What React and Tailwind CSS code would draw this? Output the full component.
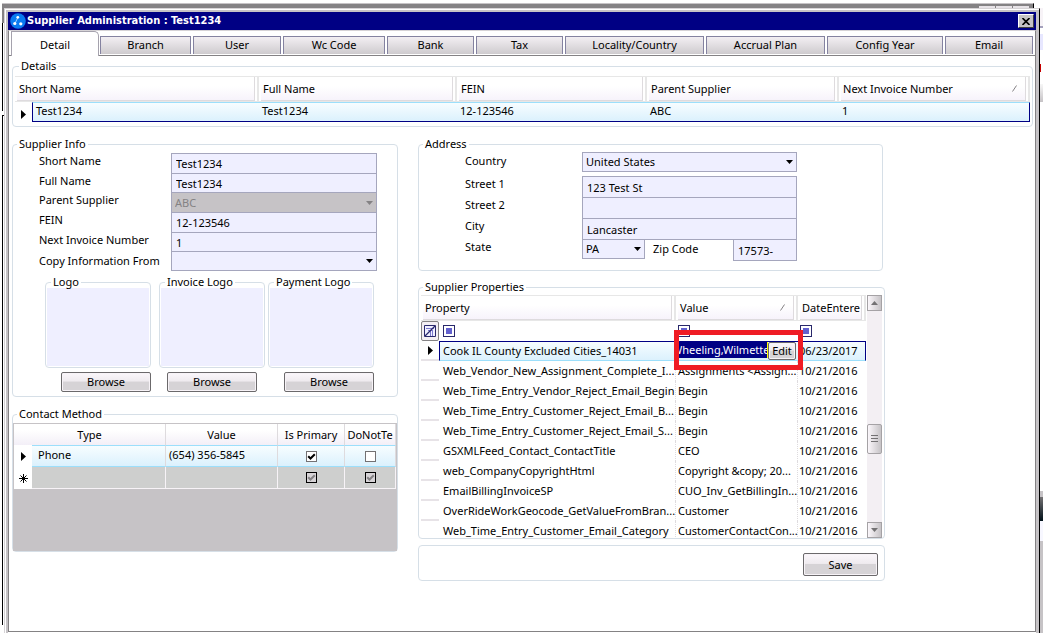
import React from "react";

const tabs = ["Detail", "Branch", "User", "Wc Code", "Bank", "Tax", "Locality/Country", "Accrual Plan", "Config Year", "Email"];

const properties = [
  ["Web_Vendor_New_Assignment_Complete_I...", "Assignments <Assign...", "10/21/2016"],
  ["Web_Time_Entry_Vendor_Reject_Email_Begin", "Begin", "10/21/2016"],
  ["Web_Time_Entry_Customer_Reject_Email_B...", "Begin", "10/21/2016"],
  ["Web_Time_Entry_Customer_Reject_Email_S...", "Begin", "10/21/2016"],
  ["GSXMLFeed_Contact_ContactTitle", "CEO", "10/21/2016"],
  ["web_CompanyCopyrightHtml", "Copyright &copy; 20...", "10/21/2016"],
  ["EmailBillingInvoiceSP", "CUO_Inv_GetBillingIn...", "10/21/2016"],
  ["OverRideWorkGeocode_GetValueFromBran...", "Customer", "10/21/2016"],
  ["Web_Time_Entry_Customer_Email_Category", "CustomerContactCon...", "10/21/2016"],
];

const BUTTON =
  "rounded-[2px] border border-[#6b696b] bg-[linear-gradient(#fbf7fb_0%,#efebef_45%,#d6d3d6_50%,#d6d3d6_100%)] shadow-[inset_0_0_0_1px_#f7f3f7]";
const FIELD = "min-w-0 border border-[#a5a6bd] bg-[#efefff] px-1 text-black outline-none";
const ROW = "bg-[linear-gradient(#f7fdff,#dbf1fd)]";

function Group({ title, className = "", legendClass = "leading-4", children }) {
  return (
    <fieldset className={`min-w-0 rounded-[4px] border border-[#d6dfe7] ${className}`}>
      {title && <legend className={`ml-1 px-0.5 whitespace-nowrap ${legendClass}`}>{title}</legend>}
      {children}
    </fieldset>
  );
}

function Pointer() {
  return (
    <svg viewBox="0 0 5 9" className="mx-auto h-[9px] w-[5px]" aria-hidden="true">
      <path d="M0 0L5 4.5L0 9Z" fill="#000" />
    </svg>
  );
}

function Select({ id, value, disabled, className = "" }) {
  return (
    <div className={`relative min-w-0 ${className}`}>
      <select
        id={id}
        defaultValue={value}
        disabled={disabled}
        className="block h-full w-full appearance-none border border-[#a5a6bd] bg-[#efefff] pr-4 pl-[3px] text-black opacity-100 outline-none disabled:bg-[#c6c3c6] disabled:text-[#848284]"
      >
        <option>{value}</option>
      </select>
      <svg viewBox="0 0 7 4" className="pointer-events-none absolute top-1/2 right-1 -mt-0.5 h-1 w-[7px]" aria-hidden="true">
        <path d="M0 0H7L3.5 4Z" fill={disabled ? "#848284" : "#000"} />
      </svg>
    </div>
  );
}

function InfoRow({ id, label, height, labelClass = "pb-1", children }) {
  return (
    <div className={`flex items-center ${height}`}>
      <label htmlFor={id} className={`w-[132px] shrink-0 whitespace-nowrap ${labelClass}`}>
        {label}
      </label>
      {children}
    </div>
  );
}

function HeaderCell({ children, sort, colSpan }) {
  return (
    <th colSpan={colSpan} className="border-t border-r-2 border-b border-[#e7e7e7] p-0 text-left font-normal">
      <div className="mx-0.5 flex h-6 items-center justify-between overflow-hidden border-r border-b border-[#dedbde] bg-[linear-gradient(#fff_40%,#f7f3fb)] pr-2 pl-0.5 whitespace-nowrap">
        {children}
        {sort && (
          <svg viewBox="0 0 5 7" className="h-[7px] w-[5px]" aria-hidden="true">
            <path d="M0.5 6.5L4.5 0.5" stroke="#848284" fill="none" />
          </svg>
        )}
      </div>
    </th>
  );
}

function LogoBox({ title, align }) {
  return (
    <div className="flex w-[106px] flex-col">
      <Group title={title} legendClass="leading-3" className="px-px pb-px">
        <div className="h-[78px] bg-[#efefff]" />
      </Group>
      <button type="button" className={`mt-1 h-5 w-[90px] ${align} ${BUTTON}`}>
        Browse
      </button>
    </div>
  );
}

function Tick({ label, checked, dim }) {
  return (
    <label className="relative mx-auto block h-[11px] w-[11px]">
      <input
        type="checkbox"
        aria-label={label}
        defaultChecked={checked}
        className={`block h-[11px] w-[11px] appearance-none border ${dim ? "border-black bg-[#d6d3d6]" : "border-[#737173] bg-white"}`}
      />
      {checked && (
        <svg viewBox="0 0 11 11" className="pointer-events-none absolute inset-0 h-[11px] w-[11px]" aria-hidden="true">
          <path d="M2.2 5.2L4.5 7.5L8.8 3.2" stroke={dim ? "#848284" : "#000"} strokeWidth="2" fill="none" />
        </svg>
      )}
    </label>
  );
}

function FilterMark() {
  return (
    <span className="block h-3 w-3 border border-[#29286b] bg-white p-0.5">
      <span className="block h-full w-full bg-[#6361ce]" />
    </span>
  );
}

function ContactTable() {
  const head = "border-r border-[#dedbde] bg-[linear-gradient(#fff_30%,#f3eff7)] p-0 font-normal whitespace-nowrap overflow-hidden";
  const cur = `border-y border-r border-y-[#9cdffb] border-r-[#dedbde] p-0 ${ROW}`;
  const blank = "border-r border-b border-[#f7f3f7] bg-[#cecfce] p-0";
  return (
    <table className="w-full table-fixed border-separate border-spacing-0">
      <colgroup>
        <col className="w-[18px]" />
        <col />
        <col className="w-28" />
        <col className="w-[67px]" />
        <col className="w-[51px]" />
      </colgroup>
      <thead>
        <tr className="h-[21px]">
          <th colSpan={2} className={head}>Type</th>
          <th className={head}>Value</th>
          <th className={head}>Is Primary</th>
          <th className={head}>DoNotTe</th>
        </tr>
      </thead>
      <tbody>
        <tr className="h-[22px]">
          <td className="bg-white p-0"><Pointer /></td>
          <td className={cur}><span className="block pb-0.5 pl-1.5">Phone</span></td>
          <td className={cur}><span className="block pb-0.5 pl-[3px]">(654) 356-5845</span></td>
          <td className={cur}><Tick label="Is primary, Phone" checked /></td>
          <td className={cur}><Tick label="Do not text, Phone" /></td>
        </tr>
        <tr className="h-[22px]">
          <td className="bg-white p-0">
            <svg viewBox="0 0 9 9" className="mx-auto h-[9px] w-[9px]" aria-hidden="true">
              <path d="M4.5 0V9M0 4.5H9M1.5 1.5L7.5 7.5M7.5 1.5L1.5 7.5" stroke="#000" fill="none" />
            </svg>
          </td>
          <td className={blank} />
          <td className={blank} />
          <td className={blank}><Tick label="Is primary, new row" checked dim /></td>
          <td className={blank}><Tick label="Do not text, new row" checked dim /></td>
        </tr>
      </tbody>
    </table>
  );
}

function DetailsTable() {
  const cell = "border-t border-b border-t-[#9cdffb] border-b-[#000084] px-[3px] pt-0 pb-0.5";
  return (
    <table className="w-full table-fixed border-separate border-spacing-0">
      <colgroup>
        <col className="w-[17px]" />
        <col className="w-[227px]" />
        <col className="w-[198px]" />
        <col className="w-[190px]" />
        <col className="w-48" />
        <col />
      </colgroup>
      <thead>
        <tr>
          <HeaderCell colSpan={2}>Short Name</HeaderCell>
          <HeaderCell>Full Name</HeaderCell>
          <HeaderCell>FEIN</HeaderCell>
          <HeaderCell>Parent Supplier</HeaderCell>
          <HeaderCell sort>Next Invoice Number</HeaderCell>
        </tr>
      </thead>
      <tbody>
        <tr className="h-5">
          <td className="p-0 pt-1"><Pointer /></td>
          <td className={`border-l border-l-[#000084] ${cell} ${ROW}`}>Test1234</td>
          <td className={`${cell} ${ROW}`}>Test1234</td>
          <td className={`${cell} ${ROW}`}>12-123546</td>
          <td className={`${cell} ${ROW}`}>ABC</td>
          <td className={`border-r border-r-[#000084] ${cell} ${ROW}`}>1</td>
        </tr>
      </tbody>
    </table>
  );
}

function PropertiesTable() {
  const cur = `border-t border-b border-t-[#000084] border-b-[#9cdffb] p-0 ${ROW}`;
  return (
    <table className="w-full table-fixed border-separate border-spacing-0">
      <colgroup>
        <col className="w-[18px]" />
        <col />
        <col className="w-[122px]" />
        <col className="w-[68px]" />
      </colgroup>
      <thead>
        <tr>
          <HeaderCell colSpan={2}>Property</HeaderCell>
          <HeaderCell sort>Value</HeaderCell>
          <HeaderCell>DateEntere</HeaderCell>
        </tr>
      </thead>
      <tbody>
        <tr className="h-5">
          <td className="p-0">
            <button type="button" aria-label="Clear filters" className="flex h-5 w-[18px] items-center justify-center rounded-[2px] border border-[#848284] bg-[#f3eff3]">
              <svg viewBox="0 0 12 12" className="h-3 w-3" aria-hidden="true">
                <path d="M0.5 0.5H11.5V11.5H0.5Z" fill="#efefff" stroke="#29286b" />
                <path d="M2 3.5H10M4 5.5H9M6.5 5.5V11M8.5 5.5V11" fill="none" stroke="#7b79ce" />
                <path d="M1 11L11 1" stroke="#29286b" strokeWidth="1.3" />
              </svg>
            </button>
          </td>
          <td className="p-0 pl-1"><FilterMark /></td>
          <td className="p-0 pl-0.5"><FilterMark /></td>
          <td className="p-0 pl-0.5"><FilterMark /></td>
        </tr>
        <tr className="h-5">
          <td className="border-b-2 border-[#e7e3e7] p-0"><Pointer /></td>
          <td className={`border-l border-l-[#000084] ${cur}`}><span className="block pl-[3px]">Cook IL County Excluded Cities_14031</span></td>
          <td className={`relative ${cur}`}>
            <div className="flex h-[18px] pl-0.5">
              <input
                aria-label="Value"
                defaultValue="Wheeling,Wilmette"
                className="mb-0.5 min-w-0 flex-1 border-r border-[#ffff00] bg-[#000084] -indent-1.5 text-white outline-none"
              />
              <button type="button" className={`mr-0.5 w-7 ${BUTTON}`}>Edit</button>
            </div>
            <div className="pointer-events-none absolute -top-3 -left-0.5 z-10 h-10 w-[129px] border-[5px] border-[#ef1c24]" />
          </td>
          <td className={`border-r border-r-[#000084] ${cur}`}><span className="block pl-px">06/23/2017</span></td>
        </tr>
        {properties.map(([name, value, date]) => (
          <tr key={name} className="h-5">
            <td className="border-b-2 border-[#e7e3e7] p-0" />
            <td className="border-r border-dotted border-[#dedbde] p-0 whitespace-nowrap"><span className="block pl-1">{name}</span></td>
            <td className="border-r border-dotted border-[#dedbde] p-0 whitespace-nowrap"><span className="block pl-0.5">{value}</span></td>
            <td className="p-0 pl-px">{date}</td>
          </tr>
        ))}
      </tbody>
    </table>
  );
}

function ScrollBar() {
  const part = "flex w-full items-center justify-center border border-[#a5a2a5] bg-[linear-gradient(90deg,#fbf7fb,#c6c3c6)]";
  return (
    <div className="flex w-[15px] shrink-0 flex-col bg-[#f3eff3]">
      <button type="button" aria-label="Scroll up" className={`h-4 ${part}`}>
        <svg viewBox="0 0 7 4" className="h-1 w-[7px]"><path d="M0 4H7L3.5 0Z" fill="#737173" /></svg>
      </button>
      <div className="flex-[112]" />
      <div className={`h-[30px] rounded-[2px] ${part}`}>
        <svg viewBox="0 0 7 8" className="h-2 w-[7px]"><path d="M0 0.5H7M0 3.5H7M0 6.5H7" stroke="#737173" /></svg>
      </div>
      <div className="flex-[68]" />
      <button type="button" aria-label="Scroll down" className={`h-4 ${part}`}>
        <svg viewBox="0 0 7 4" className="h-1 w-[7px]"><path d="M0 0H7L3.5 4Z" fill="#737173" /></svg>
      </button>
    </div>
  );
}

function TitleBar() {
  return (
    <header className="flex h-[18px] items-center bg-[#000084] pr-0.5 pl-0.5">
      <svg viewBox="0 0 16 16" className="h-4 w-4" aria-hidden="true">
        <circle cx="8" cy="8" r="7.8" fill="#0a7bf0" />
        <path d="M7.8 4.5L5 10.5" stroke="#9cd0ff" strokeWidth="1" />
        <circle cx="7.8" cy="4.3" r="1.4" fill="#fff" />
        <circle cx="4.8" cy="10.5" r="1.6" fill="#fff" />
        <circle cx="10.8" cy="10.8" r="1.6" fill="#fff" />
      </svg>
      <h1 className="ml-px flex-1 font-['DejaVu_Sans_Condensed','DejaVu_Sans',sans-serif] text-[11px] font-bold text-white">
        Supplier Administration : Test1234
      </h1>
      <button type="button" aria-label="Close" className="flex h-3.5 w-4 items-center justify-center border border-t-white border-r-[#424142] border-b-[#424142] border-l-white bg-[#c6c3c6]">
        <svg viewBox="0 0 8 7" className="h-[7px] w-2"><path d="M0.5 0L7.5 7M7.5 0L0.5 7" stroke="#000" strokeWidth="1.6" /></svg>
      </button>
    </header>
  );
}

function TabBar() {
  return (
    <nav role="tablist" className="grid h-[25px] grid-cols-[88fr_93fr_90fr_104fr_89fr_89fr_141fr_121fr_118fr_90fr] items-end bg-white pr-px pl-0.5 shadow-[inset_0_-1px_0_#848284]">
      {tabs.map((t, i) => (
        <button
          key={t}
          type="button"
          role="tab"
          aria-selected={i === 0}
          className={
            i === 0
              ? "h-[25px] rounded-tr-[5px] border border-b-0 border-[#a5a2ad] bg-white pt-0.5"
              : "mr-px mb-0.5 ml-px h-[18px] border border-b-0 border-[#8482a0] bg-[linear-gradient(#f3eff3,#cecbce)] pb-px leading-4"
          }
        >
          {t}
        </button>
      ))}
    </nav>
  );
}

export default function App() {
  return (
    <div className="flex min-h-screen flex-col bg-white font-['Noto_Sans','Open_Sans',sans-serif] text-[11px] leading-4 text-black">
      <div className="flex pt-[3px] pr-[9px] pl-0.5">
        <div className="flex h-[5px] flex-1 items-end justify-end gap-px border-t border-r border-t-[#c6c3c6] border-r-black bg-[#848284] pr-1">
          <span className="h-0.5 w-4 bg-[#e7e3e7]" />
          <span className="h-0.5 w-4 bg-[#e7e3e7]" />
          <span className="h-0.5 w-4 bg-[#e7e3e7]" />
        </div>
      </div>
      <div className="flex flex-1">
        <div className="ml-0.5 flex w-0.5 flex-col">
          <div className="h-[15px] bg-[#848284]" />
          <div className="h-[88px] border-l border-black" />
          <div className="mt-1 mb-2 flex-1 border-t border-l border-black" />
        </div>
        <div className="flex min-w-0 flex-1 flex-col border-t border-r border-l border-t-[#d6d3d6] border-r-black border-l-[#d6d3d6]">
          <div className="flex flex-1 flex-col border-t border-l border-white">
            <div className="flex flex-1 flex-col border-2 border-r-[3px] border-b-0 border-[#c6c3c6]">
              <TitleBar />
              <main className="mb-px flex flex-1 flex-col border-t border-r border-b border-l border-t-[#d6d3d6] border-r-[#848284] border-b-[#848284] border-l-[#848284]">
                <TabBar />
                <div className="pt-0.5 pr-0.5 pl-[3px]">
                  <Group title="Details" className="px-0.5 pb-1">
                    <div className="pt-0.5"><DetailsTable /></div>
                  </Group>
                  <div className="mt-[9px] mr-px grid grid-cols-[386fr_467fr_127fr] gap-x-5">
                    <div>
                      <Group title="Supplier Info" className="pb-1">
                        <div className="pt-px pr-5 pl-[26px]">
                          <InfoRow id="short" label="Short Name" height="h-5">
                            <input id="short" defaultValue="Test1234" className={`${FIELD} h-[21px] flex-1 self-start`} />
                          </InfoRow>
                          <InfoRow id="full" label="Full Name" height="h-[19px]">
                            <input id="full" defaultValue="Test1234" className={`${FIELD} h-5 flex-1 self-start`} />
                          </InfoRow>
                          <InfoRow id="parent" label="Parent Supplier" height="h-5">
                            <Select id="parent" value="ABC" disabled className="h-[21px] flex-1 self-start" />
                          </InfoRow>
                          <InfoRow id="fein" label="FEIN" height="h-5">
                            <input id="fein" defaultValue="12-123546" className={`${FIELD} h-[21px] flex-1 self-start`} />
                          </InfoRow>
                          <InfoRow id="next" label="Next Invoice Number" height="h-[19px]">
                            <input id="next" defaultValue="1" className={`${FIELD} h-5 flex-1 self-start`} />
                          </InfoRow>
                          <InfoRow id="copy" label="Copy Information From" height="h-5" labelClass="">
                            <Select id="copy" value="" className="h-5 flex-1 self-start" />
                          </InfoRow>
                        </div>
                        <div className="mt-[5px] grid grid-cols-[114px_109px_106px] pl-8">
                          <LogoBox title="Logo" align="self-end" />
                          <LogoBox title="Invoice Logo" align="self-center" />
                          <LogoBox title="Payment Logo" align="self-end" />
                        </div>
                      </Group>
                      <Group title="Contact Method" className="mt-[9px]">
                        <div className="pt-px">
                          <div className="min-h-32 border border-[#c6c3c6] bg-[#c6c3c6]">
                            <ContactTable />
                          </div>
                        </div>
                      </Group>
                    </div>
                    <div>
                      <Group title="Address" className="mr-0.5 pb-[9px]">
                        <div className="grid grid-cols-[117px_1fr] pr-[85px] pl-[46px]">
                          <label htmlFor="country" className="pt-px">Country</label>
                          <Select id="country" value="United States" className="mb-1 h-5" />
                          <label htmlFor="s1">Street 1</label>
                          <input id="s1" defaultValue="123 Test St" className={`${FIELD} -mb-px h-[22px]`} />
                          <label htmlFor="s2">Street 2</label>
                          <input id="s2" defaultValue="" className={`${FIELD} -mb-px h-[22px]`} />
                          <label htmlFor="city">City</label>
                          <input id="city" defaultValue="Lancaster" className={`${FIELD} -mb-px h-[22px]`} />
                          <label htmlFor="state">State</label>
                          <div className="flex items-start">
                            <Select id="state" value="PA" className="h-5 w-[63px]" />
                            <label htmlFor="zip" className="flex-1 pt-0.5 pl-2">Zip Code</label>
                            <input id="zip" defaultValue="17573-" className={`${FIELD} h-[22px] w-16`} />
                          </div>
                        </div>
                      </Group>
                      <Group title="Supplier Properties" className="mt-2 pr-0.5">
                        <div className="flex h-[243px] overflow-hidden pl-0.5">
                          <div className="mr-px min-w-0 flex-1"><PropertiesTable /></div>
                          <ScrollBar />
                        </div>
                      </Group>
                      <Group className="mt-1.5 flex justify-end pt-[7px] pr-1.5 pb-1">
                        <button type="button" className={`h-[23px] w-[75px] ${BUTTON}`}>Save</button>
                      </Group>
                    </div>
                  </div>
                </div>
              </main>
            </div>
          </div>
        </div>
        <div className="flex w-[3px] flex-col overflow-hidden">
          <div className="h-[18px] bg-[#f7f3f7]" />
          <div className="h-0.5 bg-[#a5a2bd]" />
          <div className="mt-1.5 h-4 bg-[#e7e7ff]" />
          <div className="mt-3.5 h-2 w-px bg-[#c60000]" />
          <div className="mt-3 h-[18px] bg-[linear-gradient(#f7f7f7,#c6c3c6)]" />
          <div className="flex-[389]" />
          <div className="h-1.5 bg-[#c6c3c6]" />
          <div className="h-6 bg-[linear-gradient(#737173,#001018)]" />
          <div className="h-5 bg-[#f7f7ff]" />
          <div className="flex-[92] bg-[#c6c3c6]" />
        </div>
      </div>
    </div>
  );
}
